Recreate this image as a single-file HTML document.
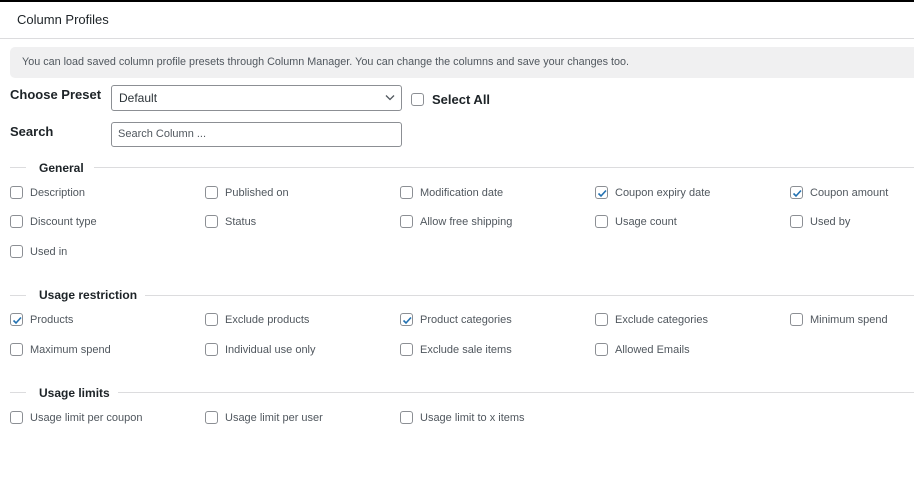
<!DOCTYPE html><html><head><style>
*{box-sizing:border-box;margin:0;padding:0}
body{width:914px;height:481px;background:#fff;font-family:"Liberation Sans",sans-serif;color:#3c434a;position:relative;overflow:hidden}
.a{position:absolute;white-space:nowrap}
.cb{position:absolute;width:13px;height:13px;border:1px solid #8c8f94;border-radius:3px;background:#fff}
.cb svg{position:absolute;left:0;top:0}
.t{position:absolute;font-size:11px;color:#50575e;white-space:nowrap}
.sec{position:absolute;font-size:12px;font-weight:bold;color:#1d2327;white-space:nowrap}
.ln{position:absolute;height:1px;background:#dcdcde}
</style></head><body>
<div class="a" style="left:0;top:0;width:914px;height:2px;background:#000"></div>
<div class="a" style="left:17px;top:12px;font-size:13px;color:#1d2327">Column Profiles</div>
<div class="ln" style="left:0;top:38px;width:914px"></div>
<div class="a" style="left:10px;top:47px;width:910px;height:31px;background:#f0f0f1;border-radius:5px"></div>
<div class="a" style="left:22px;top:56px;font-size:10.8px;color:#50575e">You can load saved column profile presets through Column Manager. You can change the columns and save your changes too.</div>
<div class="a" style="left:10px;top:87px;font-size:13px;font-weight:bold;color:#1d2327">Choose Preset</div>
<div class="a" style="left:111px;top:85px;width:291px;height:26px;border:1px solid #8c8f94;border-radius:3px"></div>
<div class="a" style="left:119px;top:91px;font-size:12px;color:#2c3338">Default</div>
<svg class="a" style="left:385px;top:94px" width="10" height="7"><path d="M1 1.5 L5 5.5 L9 1.5" fill="none" stroke="#50575e" stroke-width="1.3"/></svg>
<div class="cb" style="left:411px;top:93px"></div>
<div class="a" style="left:432px;top:92px;font-size:13px;font-weight:bold;color:#1d2327">Select All</div>
<div class="a" style="left:10px;top:124px;font-size:13px;font-weight:bold;color:#1d2327">Search</div>
<div class="a" style="left:111px;top:122px;width:291px;height:25px;border:1px solid #8c8f94;border-radius:3px"></div>
<div class="a" style="left:118px;top:128px;font-size:11px;color:#50575e">Search Column ...</div>

<div class="ln" style="left:10px;top:167px;width:16px"></div>
<div class="sec" style="left:39px;top:161px">General</div>
<div class="ln" style="left:94px;top:167px;width:820px"></div>

<div class="ln" style="left:10px;top:295px;width:16px"></div>
<div class="sec" style="left:39px;top:288px">Usage restriction</div>
<div class="ln" style="left:145px;top:295px;width:769px"></div>

<div class="ln" style="left:10px;top:392px;width:16px"></div>
<div class="sec" style="left:39px;top:386px">Usage limits</div>
<div class="ln" style="left:118px;top:392px;width:796px"></div>

<div id="items"></div>
<script>
var rows=[[186,["Description","Published on","Modification date","*Coupon expiry date","*Coupon amount"]],
[215,["Discount type","Status","Allow free shipping","Usage count","Used by"]],
[245,["Used in"]],
[313,["*Products","Exclude products","*Product categories","Exclude categories","Minimum spend"]],
[343,["Maximum spend","Individual use only","Exclude sale items","Allowed Emails"]],
[411,["Usage limit per coupon","Usage limit per user","Usage limit to x items"]]];
var h="";
rows.forEach(function(r){r[1].forEach(function(s,i){var x=10+195*i,c=s[0]=="*";if(c)s=s.slice(1);
h+='<div class="cb" style="left:'+x+'px;top:'+r[0]+'px">'+(c?'<svg width="13" height="13"><path d="M2.5 6.5 L5 9 L10 3.5" fill="none" stroke="#2271b1" stroke-width="1.6"/></svg>':'')+'</div>';
h+='<div class="t" style="left:'+(x+20)+'px;top:'+(r[0]+1)+'px">'+s+'</div>';});});
document.getElementById("items").innerHTML=h;
</script>
</body></html>
